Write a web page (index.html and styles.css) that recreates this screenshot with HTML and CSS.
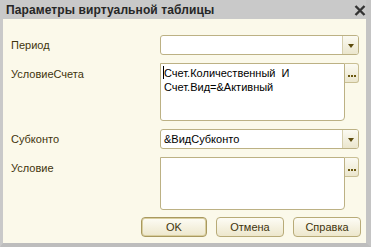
FILE: index.html
```html
<!DOCTYPE html>
<html lang="ru">
<head>
    <meta charset="UTF-8">
    <title>Параметры виртуальной таблицы</title>
    <link rel="stylesheet" href="styles.css">
</head>
<body>
    <div class="window">
        <div class="titlebar">
            <span class="title">Параметры виртуальной таблицы</span>
            <svg class="close" width="12" height="11" viewBox="0 0 12 11">
                <path d="M1.5 1 L10.5 10 M10.5 1 L1.5 10" stroke="#333" stroke-width="2.4" fill="none"/>
            </svg>
        </div>
        <div class="content">
            <div class="form">
                <div class="label">Период</div>
                <div class="combo">
                    <div class="combo-text"></div>
                    <div class="combo-btn"><span class="arrow"></span></div>
                </div>

                <div class="label top">УсловиеСчета</div>
                <div class="area-row">
                    <div class="area tall"><span class="caret"></span>Счет.Количественный&nbsp; И<br>Счет.Вид=&amp;Активный</div>
                    <div class="dots"><span></span><span></span><span></span></div>
                </div>

                <div class="label">Субконто</div>
                <div class="combo">
                    <div class="combo-text">&amp;ВидСубконто</div>
                    <div class="combo-btn"><span class="arrow"></span></div>
                </div>

                <div class="label top">Условие</div>
                <div class="area-row">
                    <div class="area short"></div>
                    <div class="dots"><span></span><span></span><span></span></div>
                </div>
            </div>
            <div class="buttons">
                <button class="btn default">OK</button>
                <button class="btn">Отмена</button>
                <button class="btn">Справка</button>
            </div>
        </div>
    </div>
</body>
</html>
```

FILE: styles.css
```css
body { margin: 0; font-family: "Liberation Sans", Arial, sans-serif; font-size: 11px; background: #c9c9c9; }
.window { width: 371px; height: 247px; box-sizing: border-box; background: #c9c9c9; border-left: 3px solid #c9c9c9; border-right: 5px solid #c4c4c4; border-bottom: 4px solid #bdbdbd; display: flex; flex-direction: column; }
.titlebar { height: 21px; display: flex; align-items: center; justify-content: space-between; padding: 0 5px 0 6px; margin-left: -3px; margin-right: -5px; }
.title { font-weight: bold; font-size: 12px; color: #262626; letter-spacing: 0.1px; }
.close { margin-top: 1px; }
.content { flex: 1; background: #fbf9ea; padding: 16px 7px 6px 8px; display: flex; flex-direction: column; }
.form { display: grid; grid-template-columns: 149px 199px; row-gap: 8px; color: #3f340c; }
.label { line-height: 20px; color: #3f340c; }
.label.top { padding-top: 1px; }
.combo { height: 20px; box-sizing: border-box; border: 1px solid #bcb184; border-radius: 3px; background: #fff; display: flex; overflow: hidden; }
.combo-text { flex: 1; padding-left: 3px; line-height: 18px; color: #000; }
.combo-btn { width: 15px; border-left: 1px solid #d6cfae; background: linear-gradient(#fbfaf2, #ebe6cd); display: flex; align-items: center; justify-content: center; }
.arrow { width: 0; height: 0; border-left: 3.5px solid transparent; border-right: 3.5px solid transparent; border-top: 4px solid #5b4a0c; margin-top: 1px; }
.area-row { display: flex; align-items: flex-start; }
.area { width: 185px; box-sizing: border-box; border: 1px solid #bcb184; border-radius: 0 0 4px 3px; background: #fff; padding: 2px 3px; line-height: 14px; color: #000; }
.area.tall { height: 58px; }
.area.short { height: 53px; }
.caret { display: inline-block; width: 1px; height: 13px; background: #000; vertical-align: -2px; margin-left: -1px; }
.dots { width: 14px; height: 20px; box-sizing: border-box; border: 1px solid #c9bf94; border-left: none; border-radius: 0 3px 3px 0; background: linear-gradient(#fbfaf2, #ebe6cd); display: flex; align-items: flex-end; justify-content: center; gap: 1px; padding-bottom: 5px; }
.dots span { width: 2px; height: 2px; background: #6b5810; }
.buttons { margin-top: 7px; margin-right: -2px; display: flex; justify-content: flex-end; gap: 9px; }
.btn { height: 20px; width: 68px; padding: 0; border: 1px solid #b8ab78; border-radius: 4px; background: linear-gradient(#fdfcf5, #ede7cc); font-family: "Liberation Sans", Arial, sans-serif; font-size: 11px; color: #3f340c; }
.btn.default { width: 66px; border-color: #a9995f; box-shadow: inset 0 0 0 1px #d9cf9f; }
```
